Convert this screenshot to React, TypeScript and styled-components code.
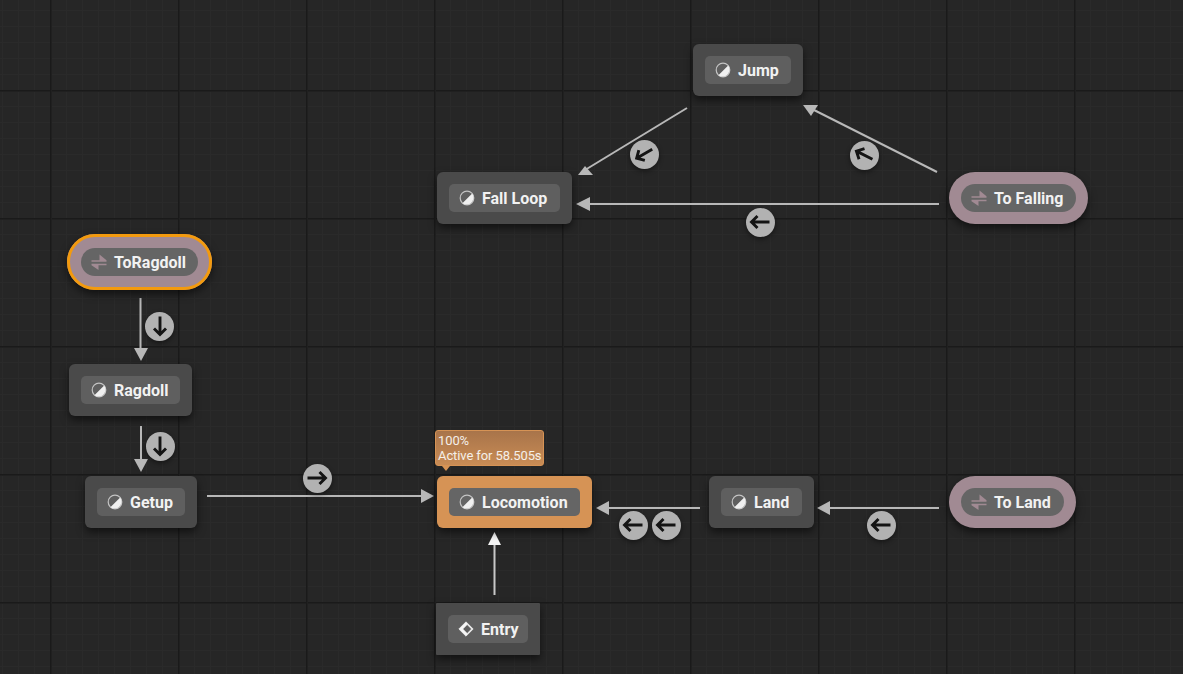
import React from "react";
import styled, { createGlobalStyle } from "styled-components";

const Global = createGlobalStyle`
  html, body { margin: 0; padding: 0; background: #262626; overflow: hidden; }
  #root { width: 1183px; height: 674px; }
`;

const Canvas = styled.div`
  position: relative;
  width: 1183px;
  height: 674px;
  overflow: hidden;
  font-family: Roboto, "Liberation Sans", sans-serif;
  background-color: #262626;
  background-image:
    linear-gradient(to right, #1a1a1a 0, #1a1a1a 1px, #202020 1px, #202020 2px, transparent 2px),
    linear-gradient(to bottom, #1a1a1a 0, #1a1a1a 1px, #202020 1px, #202020 2px, transparent 2px),
    linear-gradient(to right, #2a2a2a 0, #2a2a2a 1px, transparent 1px),
    linear-gradient(to bottom, #2a2a2a 0, #2a2a2a 1px, transparent 1px);
  background-size: 128px 128px, 128px 128px, 16px 16px, 16px 16px;
  background-position: 50px 0, 0 90px, 2px 0, 0 10px;
`;

const Edges = styled.svg`
  position: absolute;
  inset: 0;
  width: 1183px;
  height: 674px;
`;

type Kind = "state" | "active" | "conduit" | "entry";

const bg: Record<Kind, string> = {
  state: "#4a4a4a",
  active: "#d69355",
  conduit: "#a18a93",
  entry: "#4a4a4a",
};

const Node = styled.div<{ $kind: Kind; $x: number; $y: number; $w: number; $selected?: boolean }>`
  position: absolute;
  left: ${(p) => p.$x}px;
  top: ${(p) => p.$y}px;
  width: ${(p) => p.$w}px;
  box-sizing: border-box;
  padding: ${(p) => (p.$selected ? "14px" : "12px")};
  background: ${(p) => bg[p.$kind]};
  border-radius: ${(p) => (p.$kind === "conduit" ? "28px" : p.$kind === "entry" ? "1px" : "6px")};
  box-shadow: 0 4px 9px rgba(0, 0, 0, 0.55);
  ${(p) => (p.$selected ? "outline: 3px solid #f39a0e; outline-offset: -3px;" : "")}
`;

const Chip = styled.div<{ $kind: Kind }>`
  display: flex;
  align-items: center;
  gap: 7px;
  height: 28px;
  padding-left: 10px;
  box-sizing: border-box;
  border-radius: ${(p) => (p.$kind === "conduit" ? "14px" : "5px")};
  background: ${(p) => (p.$kind === "conduit" || p.$kind === "active" ? "#656565" : "#5f5f5f")};
  color: #f2f2f2;
  font-size: 16px;
  font-weight: 700;
  white-space: nowrap;
`;

const Label = styled.span`
  line-height: 28px;
  margin-top: 2px;
`;

const Badge = styled.div<{ $x: number; $y: number }>`
  position: absolute;
  left: ${(p) => p.$x - 14.5}px;
  top: ${(p) => p.$y - 14.5}px;
  width: 29px;
  height: 29px;
  border-radius: 50%;
  background: #b2b2b2;
  display: flex;
  align-items: center;
  justify-content: center;
  box-shadow: 0 2px 5px rgba(0, 0, 0, 0.45);
`;

const Tip = styled.div`
  position: absolute;
  left: 435px;
  top: 430px;
  width: 109px;
  height: 36px;
  box-sizing: border-box;
  padding: 2px 2px;
  border: 1px solid #d69355;
  border-radius: 3px;
  background: linear-gradient(to bottom, #a8744a, #c98c55);
  color: #f4efe9;
  font-size: 13px;
  line-height: 15px;
  letter-spacing: -0.1px;
  white-space: nowrap;
  &::after {
    content: "";
    position: absolute;
    left: 6px;
    top: 35px;
    border-left: 4px solid transparent;
    border-right: 4px solid transparent;
    border-top: 5px solid #d69355;
  }
`;

const Glyph = styled.svg`
  flex: none;
  width: 16px;
  height: 16px;
`;

const ArrowGlyph = styled.svg<{ $deg: number }>`
  width: 22px;
  height: 22px;
  transform: rotate(${(p) => p.$deg}deg);
`;

const HalfIcon = () => (
  <Glyph viewBox="0 0 16 16">
    <circle cx="8" cy="8" r="6.8" fill="none" stroke="#c4c4c4" strokeWidth="1.2" />
    <path d="M13.2 3.4 A7 7 0 0 1 3.4 13.2 Z" fill="#f0f0f0" />
  </Glyph>
);

const SwapIcon = () => (
  <Glyph viewBox="0 0 16 16">
    <path d="M0.5 6.3H15.5V7.8H0.5ZM8.5 0.5L15.5 6.3H8.5ZM0.5 9.7H15.5V11.2H0.5ZM0.5 11.2H7.5V16Z" fill="#a18a93" />
  </Glyph>
);

const EntryIcon = () => (
  <Glyph viewBox="0 0 16 16">
    <path
      fillRule="evenodd"
      d="M8 0.8 L15.2 8 L8 15.2 L0.8 8 Z M9.2 3.6 L4.8 8 L9.2 12.4 L13.6 8 Z"
      fill="#f6f6f6"
      stroke="#f6f6f6"
      strokeWidth="0.6"
      strokeLinejoin="round"
    />
  </Glyph>
);

const Arrow = ({ deg }: { deg: number }) => (
  <ArrowGlyph viewBox="0 0 22 22" $deg={deg}>
    <path d="M20.5 11H2.5M8.5 5L2.5 11L8.5 17" fill="none" stroke="#141414" strokeWidth="2.9" />
  </ArrowGlyph>
);

const nodes: { label: string; kind: Kind; x: number; y: number; w: number; selected?: boolean }[] = [
  { label: "Jump", kind: "state", x: 693, y: 44, w: 110 },
  { label: "Fall Loop", kind: "state", x: 437, y: 172, w: 135 },
  { label: "To Falling", kind: "conduit", x: 949, y: 172, w: 139 },
  { label: "ToRagdoll", kind: "conduit", x: 67, y: 234, w: 145, selected: true },
  { label: "Ragdoll", kind: "state", x: 69, y: 364, w: 123 },
  { label: "Getup", kind: "state", x: 85, y: 476, w: 112 },
  { label: "Locomotion", kind: "active", x: 437, y: 476, w: 155 },
  { label: "Land", kind: "state", x: 709, y: 476, w: 105 },
  { label: "To Land", kind: "conduit", x: 949, y: 476, w: 127 },
  { label: "Entry", kind: "entry", x: 436, y: 603, w: 104 },
];

const lines = [
  [687, 108, 585, 170],
  [937, 172, 812, 109],
  [939, 204, 590, 204],
  [140.5, 298, 140.5, 348],
  [141, 426, 141, 459],
  [207, 496, 421, 496],
  [700, 508, 609, 508],
  [939, 508, 830, 508],
];

const heads = [
  "578,175 593,175 585,166",
  "803,105 818,105 811,116",
  "576,204 590,197 590,211",
  "134,348 148,348 141,361",
  "134,459 148,459 141,472",
  "421,489 421,503 434,496",
  "596,508 609,501 609,515",
  "817,508 830,501 830,515",
];

const badges = [
  { x: 644, y: 154, deg: -30 },
  { x: 864, y: 155, deg: 27 },
  { x: 760, y: 222, deg: 0 },
  { x: 159.5, y: 326, deg: -90 },
  { x: 160, y: 446, deg: -90 },
  { x: 317, y: 478, deg: 180 },
  { x: 633, y: 525, deg: 0 },
  { x: 666, y: 525, deg: 0 },
  { x: 881, y: 525, deg: 0 },
];

export default function App() {
  return (
    <Canvas>
      <Global />
      <Edges viewBox="0 0 1183 674">
        {lines.map(([a, b, c, d], i) => (
          <line key={i} x1={a} y1={b} x2={c} y2={d} stroke="#b8b8b8" strokeWidth="2" />
        ))}
        {heads.map((p) => (
          <polygon key={p} points={p} fill="#b8b8b8" />
        ))}
        <line x1="494.5" y1="595" x2="494.5" y2="545" stroke="#c8c8c8" strokeWidth="2" />
        <polygon points="488,545 501,545 494.5,532" fill="#f5f5f5" />
      </Edges>
      {badges.map((b, i) => (
        <Badge key={i} $x={b.x} $y={b.y}>
          <Arrow deg={b.deg} />
        </Badge>
      ))}
      {nodes.map((n) => (
        <Node key={n.label} $kind={n.kind} $x={n.x} $y={n.y} $w={n.w} $selected={n.selected}>
          <Chip $kind={n.kind}>
            {n.kind === "conduit" ? <SwapIcon /> : n.kind === "entry" ? <EntryIcon /> : <HalfIcon />}
            <Label>{n.label}</Label>
          </Chip>
        </Node>
      ))}
      <Tip>
        100%
        <br />
        Active for 58.505s
      </Tip>
    </Canvas>
  );
}
